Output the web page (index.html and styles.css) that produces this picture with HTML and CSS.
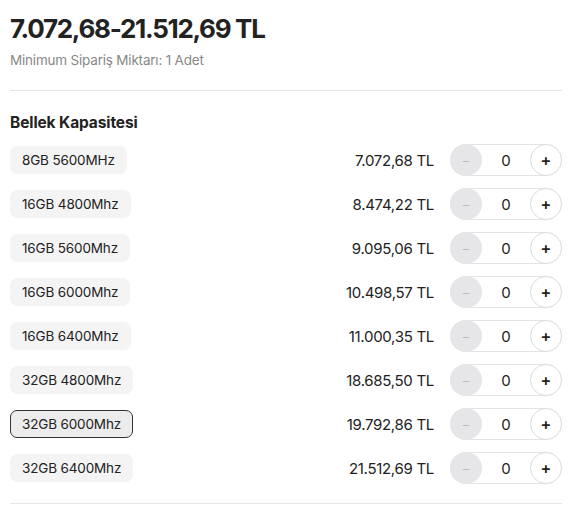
FILE: index.html
```html
<!DOCTYPE html>
<html lang="tr">
<head>
<meta charset="utf-8">
<link rel="stylesheet" href="styles.css">
</head>
<body>
<div class="wrap">
  <h1 class="price-range">7.072,68-21.512,69 TL</h1>
  <div class="min-order">Minimum Sipariş Miktarı: 1 Adet</div>
  <hr class="divider">
  <h2 class="section-title">Bellek Kapasitesi</h2>
  <div class="options">
    <div class="row"><span class="pill">8GB 5600MHz</span><span class="price">7.072,68 TL</span><div class="stepper"><span class="btn minus">–</span><span class="qty">0</span><span class="btn plus">+</span></div></div>
    <div class="row"><span class="pill">16GB 4800Mhz</span><span class="price">8.474,22 TL</span><div class="stepper"><span class="btn minus">–</span><span class="qty">0</span><span class="btn plus">+</span></div></div>
    <div class="row"><span class="pill">16GB 5600Mhz</span><span class="price">9.095,06 TL</span><div class="stepper"><span class="btn minus">–</span><span class="qty">0</span><span class="btn plus">+</span></div></div>
    <div class="row"><span class="pill">16GB 6000Mhz</span><span class="price">10.498,57 TL</span><div class="stepper"><span class="btn minus">–</span><span class="qty">0</span><span class="btn plus">+</span></div></div>
    <div class="row"><span class="pill">16GB 6400Mhz</span><span class="price">11.000,35 TL</span><div class="stepper"><span class="btn minus">–</span><span class="qty">0</span><span class="btn plus">+</span></div></div>
    <div class="row"><span class="pill">32GB 4800Mhz</span><span class="price">18.685,50 TL</span><div class="stepper"><span class="btn minus">–</span><span class="qty">0</span><span class="btn plus">+</span></div></div>
    <div class="row"><span class="pill selected">32GB 6000Mhz</span><span class="price">19.792,86 TL</span><div class="stepper"><span class="btn minus">–</span><span class="qty">0</span><span class="btn plus">+</span></div></div>
    <div class="row"><span class="pill">32GB 6400Mhz</span><span class="price">21.512,69 TL</span><div class="stepper"><span class="btn minus">–</span><span class="qty">0</span><span class="btn plus">+</span></div></div>
  </div>
  <hr class="divider bottom">
</div>
</body>
</html>
```
FILE: styles.css
```css
* { box-sizing: border-box; }
html, body { margin: 0; padding: 0; background: #fff; }
body {
  font-family: Inter, "Noto Sans", "Liberation Sans", sans-serif;
  color: #222;
}
.wrap {
  width: 552px;
  margin-left: 10px;
  padding-top: 12px;
}
.price-range {
  margin: 0;
  font-size: 26px;
  font-weight: 700;
  line-height: 34px;
  letter-spacing: -1.3px;
  color: #222;
}
.min-order {
  margin-top: 4px;
  font-size: 13.5px;
  line-height: 20px;
  color: #888;
  letter-spacing: -0.2px;
}
.divider {
  border: 0;
  border-top: 1px solid #e6e6e6;
  margin: 20px 0 0;
}
.section-title {
  margin: 22px 0 0;
  font-size: 15.5px;
  line-height: 20px;
  font-weight: 700;
  color: #222;
  letter-spacing: -0.1px;
}
.options {
  margin-top: 11px;
  display: flex;
  flex-direction: column;
  gap: 12px;
}
.row {
  display: flex;
  align-items: center;
  height: 32px;
}
.pill {
  display: inline-flex;
  align-items: center;
  height: 28px;
  padding: 0 11px;
  background: #f4f4f4;
  border: 1px solid #f4f4f4;
  border-radius: 7px;
  font-size: 13.5px;
  color: #222;
  letter-spacing: -0.15px;
}
.pill.selected {
  background: #ececec;
  border-color: #333;
}
.price {
  margin-left: auto;
  font-size: 15px;
  color: #222;
  letter-spacing: -0.3px;
}
.stepper {
  margin-left: 16px;
  width: 112px;
  height: 32px;
  border: 1px solid #e3e3e3;
  border-radius: 16px;
  display: flex;
  align-items: center;
  justify-content: space-between;
}
.btn {
  width: 32px;
  height: 32px;
  border-radius: 50%;
  display: flex;
  align-items: center;
  justify-content: center;
  margin: -1px;
  font-size: 16px;
}
.minus {
  background: #e6e6e8;
  color: #bbb;
  font-size: 12px;
}
.plus {
  background: #fff;
  border: 1px solid #ddd;
  color: #222;
  font-weight: 600;
}
.qty {
  font-size: 15px;
  color: #222;
}
.divider.bottom {
  margin-top: 19px;
}
```
